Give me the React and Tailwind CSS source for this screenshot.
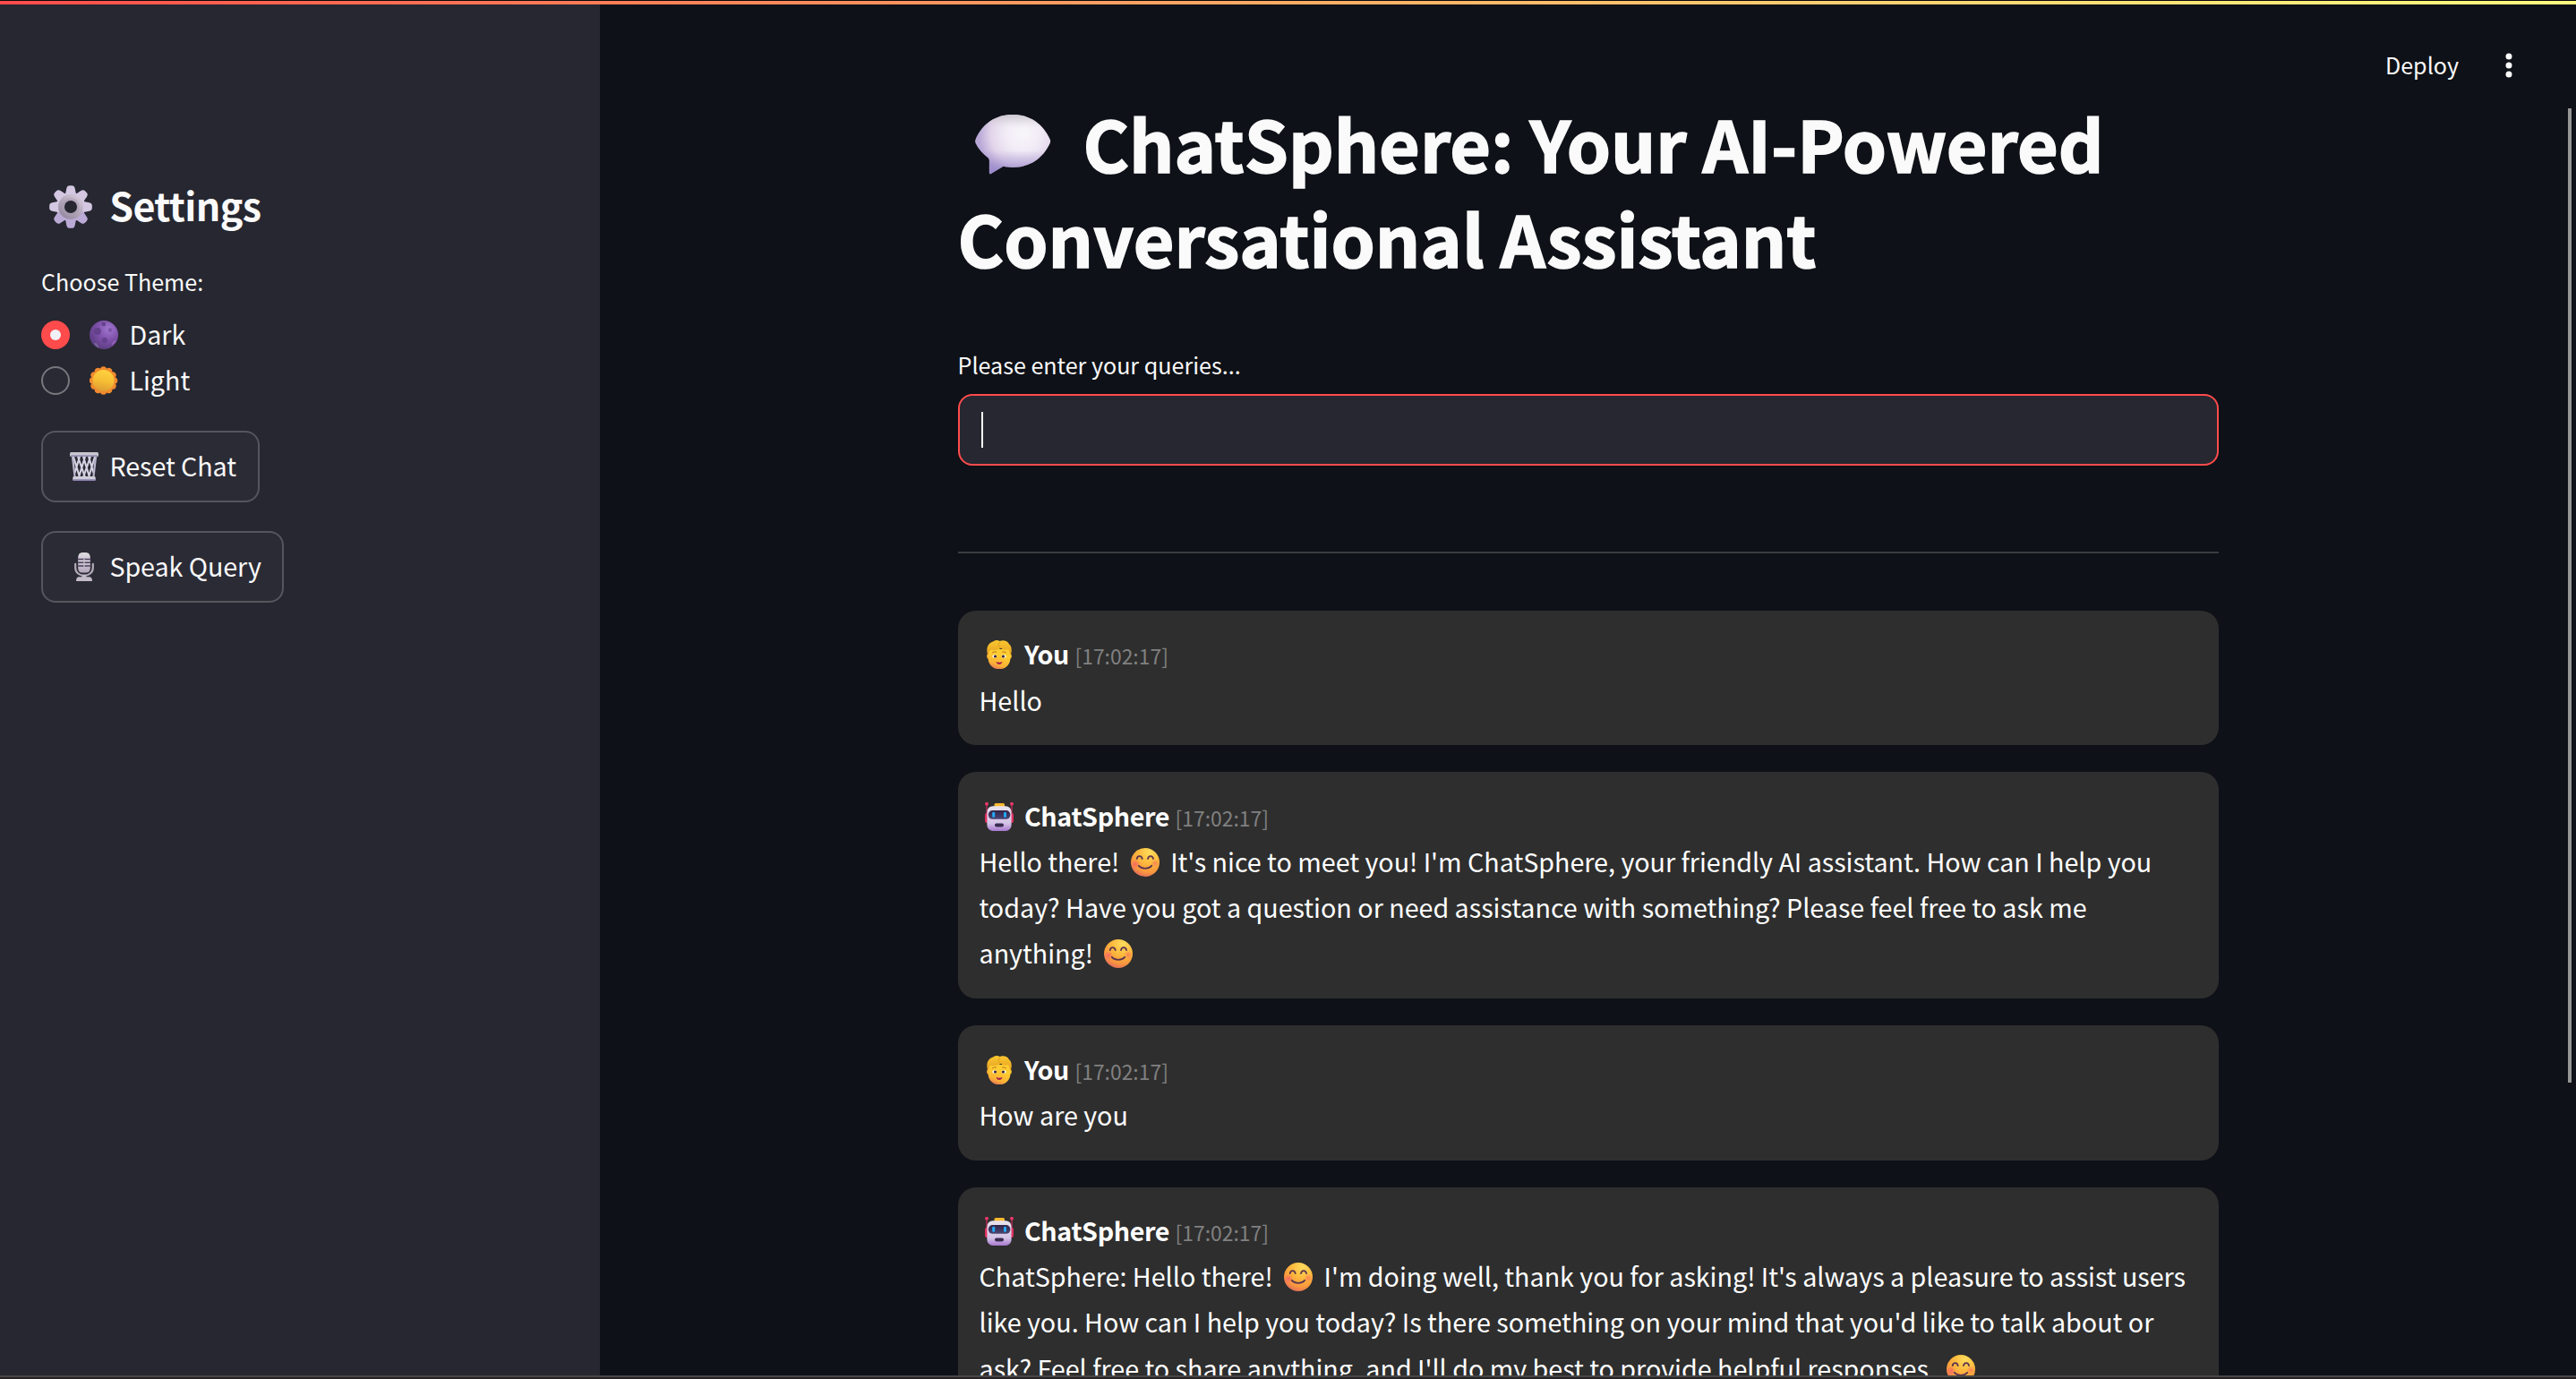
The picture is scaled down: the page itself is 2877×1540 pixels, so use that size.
import React from 'react';

function Glyph({ className = 'mx-[6px] size-8 align-[-5px]', children }) {
  return (
    <svg viewBox="0 0 32 32" className={'inline-block shrink-0 ' + className} aria-hidden="true">
      {children}
    </svg>
  );
}

function SpeechBubble() {
  return (
    <Glyph className="mx-[17px] size-[88px] align-[-14px]">
      <defs>
        <radialGradient id="bubbleFill" gradientUnits="userSpaceOnUse" cx="20" cy="11" r="18">
          <stop offset="0" stopColor="#f8f6fa" />
          <stop offset=".4" stopColor="#f1ebf6" />
          <stop offset=".72" stopColor="#e2d4ea" />
          <stop offset="1" stopColor="#b7a6d6" />
        </radialGradient>
        <linearGradient id="bubbleShade" x1="0" y1="0" x2="0" y2="1">
          <stop offset=".6" stopColor="#a394d0" stopOpacity="0" />
          <stop offset="1" stopColor="#8f80c6" stopOpacity=".85" />
        </linearGradient>
        <linearGradient id="bubbleTop" x1="0" y1="0" x2="0" y2="1">
          <stop offset="0" stopColor="#c2bfc6" stopOpacity=".8" />
          <stop offset=".22" stopColor="#d8d6da" stopOpacity="0" />
        </linearGradient>
      </defs>
      {['url(#bubbleFill)', 'url(#bubbleShade)', 'url(#bubbleTop)'].map((fill) => (
        <path
          key={fill}
          fill={fill}
          d="M.9 13.4C3.6 7 9 3.3 16 3.3s12.400 3.700 15.200 10.100q.3.7 0 1.400C28.400 21 23 24.700 16 24.700c-1.400 0-2.700-.1-3.800-.4L7.200 27.300q-.7.3-.7-.5V22q0-.6-.4-1.100C3.800 19.200 2 17.200.9 14.800q-.3-.7 0-1.400Z"
        />
      ))}
    </Glyph>
  );
}

const TEETH = [0, 45, 90, 135, 180, 225, 270, 315];

function Gear() {
  return (
    <Glyph className="ml-[9px] mr-[10px] size-12 align-[-8px]">
      <defs>
        <linearGradient id="gearBody" gradientUnits="userSpaceOnUse" x1="20" y1="0" x2="12" y2="32">
          <stop offset="0" stopColor="#dacfe6" />
          <stop offset="1" stopColor="#b9a6d5" />
        </linearGradient>
        <linearGradient id="gearRing" gradientUnits="userSpaceOnUse" x1="22" y1="8" x2="10" y2="24">
          <stop offset="0" stopColor="#d3c8d8" />
          <stop offset=".5" stopColor="#b3a8ba" />
          <stop offset="1" stopColor="#94889f" />
        </linearGradient>
        <mask id="gearHole">
          <rect width="32" height="32" fill="#fff" />
          <circle cx="16" cy="16" r="4.700" fill="#000" />
        </mask>
      </defs>
      <g mask="url(#gearHole)">
        <circle cx="16" cy="16" r="10.800" fill="url(#gearBody)" />
        {TEETH.map((a) => (
          <path
            key={a}
            transform={`rotate(${a} 16 16)`}
            fill={a > 100 && a < 260 ? '#bba9d6' : '#d3c7e2'}
            d="M11.500 9 12.900 2.200Q13.300.1 15.200.1h1.600q1.900 0 2.300 2.100L20.500 9Z"
          />
        ))}
        <circle cx="16" cy="16" r="9.300" fill="url(#gearRing)" />
        <circle cx="16" cy="16" r="6.600" fill="#a79bb0" opacity=".55" />
      </g>
    </Glyph>
  );
}

function Moon() {
  return (
    <Glyph>
      <defs>
        <radialGradient id="moonFill" cx=".66" cy=".3" r=".75">
          <stop offset="0" stopColor="#a177d0" />
          <stop offset=".5" stopColor="#7f51ab" />
          <stop offset="1" stopColor="#5b3d80" />
        </radialGradient>
      </defs>
      <circle cx="16" cy="16" r="16" fill="url(#moonFill)" />
      <g fill="#65418d">
        <circle cx="8.800" cy="12" r="4" />
        <circle cx="16.800" cy="22" r="3" />
        <circle cx="15.800" cy="4" r="2.300" />
        <circle cx="22.800" cy="10.500" r="2.200" opacity=".6" />
        <circle cx="3" cy="18" r="1.800" opacity=".7" />
      </g>
      <path d="M25 27.500q-.3-4 5.200-5.700A16 16 0 0 1 25 27.500Z" fill="#9767bd" />
      <path d="M4.800 25.500q4-2 5.600 5.400A16 16 0 0 1 4.800 25.500Z" fill="#77649a" />
    </Glyph>
  );
}

const RAYS = [0, 30, 60, 90, 120, 150, 180, 210, 240, 270, 300, 330];

function Sun() {
  return (
    <Glyph>
      <defs>
        <linearGradient id="sunFill" x1=".6" y1="0" x2=".4" y2="1">
          <stop offset="0" stopColor="#ffd23f" />
          <stop offset=".5" stopColor="#f7bf35" />
          <stop offset="1" stopColor="#dd9c33" />
        </linearGradient>
      </defs>
      <circle cx="15.500" cy="16" r="14" fill="#f28a2e" />
      {RAYS.map((a) => (
        <circle key={a} cx="15.500" cy="3.700" r="3.500" fill="#f28a2e" transform={`rotate(${a} 15.5 16)`} />
      ))}
      <circle cx="15.500" cy="16" r="12" fill="url(#sunFill)" />
    </Glyph>
  );
}

function Basket() {
  return (
    <Glyph>
      <g stroke="#d6d2e4" strokeWidth="2.100" fill="none">
        <path d="M4 5 11 28M9 5l8 23M15 5l7 23M21 5l5.500 18M28 5l-7 23M23 5l-8 23M17 5l-7 23M11 5 5.500 23" />
      </g>
      <path d="M1.800 4.500 4.600 28.500h2.200L4 4.500ZM30.200 4.500 27.400 28.500h-2.200L28 4.500Z" fill="#b9b5cc" />
      <rect x="0" y="0" width="32" height="5" rx="1.500" fill="#c9c7ce" />
      <rect x=".8" y="3.300" width="30.400" height="1.700" rx=".8" fill="#958fb2" />
      <rect x="3.300" y="27" width="25.400" height="5" rx="1.500" fill="#cfcdd8" />
      <rect x="3.800" y="30.300" width="24.400" height="1.700" rx=".8" fill="#8a7fae" />
    </Glyph>
  );
}

function Microphone() {
  return (
    <Glyph>
      <defs>
        <linearGradient id="micFill" x1="0" y1="0" x2="0" y2="1">
          <stop offset="0" stopColor="#dedbe1" />
          <stop offset="1" stopColor="#b5a9bd" />
        </linearGradient>
      </defs>
      <path d="M6.200 12.800V17c0 5 4 8.700 9.800 8.700s9.800-3.700 9.800-8.700v-4.200" fill="none" stroke="#b3aab9" strokeWidth="2.200" strokeLinecap="round" />
      <path d="M14 25h4l.6 2.200h3.600q2.800.5 2.800 4.800H7q0-4.300 2.800-4.800h3.600Z" fill="#c4bcca" />
      <path d="M9.200 6Q9.200 0 14 0h4q4.800 0 4.800 6v11q0 5.500-4.800 5.500h-4q-4.800 0-4.800-5.500Z" fill="url(#micFill)" />
      <path d="M9.200 7.500h13.600M9.200 11.300h13.600M9.200 15h13.600" stroke="#4b3f5c" strokeWidth="1.400" />
      <path d="M16 7v9" stroke="#c9c3cf" strokeWidth="1.200" />
    </Glyph>
  );
}

function Person() {
  return (
    <Glyph>
      <defs>
        <linearGradient id="personFace" x1=".7" y1="0" x2=".3" y2="1">
          <stop offset=".3" stopColor="#ffcd31" />
          <stop offset=".75" stopColor="#fbb234" />
          <stop offset="1" stopColor="#e8735a" />
        </linearGradient>
        <linearGradient id="personHair" x1="0" y1="0" x2="0" y2="1">
          <stop offset="0" stopColor="#fbc72f" />
          <stop offset="1" stopColor="#e6a424" />
        </linearGradient>
      </defs>
      <ellipse cx="4" cy="17.800" rx="1.900" ry="2.800" fill="#f7a935" />
      <ellipse cx="28" cy="17.800" rx="1.900" ry="2.800" fill="#fdbb2e" />
      <path d="M3.500 10h25v9.500c0 7.500-5.400 12.800-12.500 12.800S3.500 27 3.500 19.500Z" fill="url(#personFace)" />
      <path d="M2.800 15C1.200 8.500 3.500 3 9.500 1.200 12-.4 15 0 16.500 1 20-.8 25.500.6 27 4.200c2.700 2 3.400 6.300 2.200 10.800h-1.500q0-3-1.700-4.800c-3 1-6.500.4-8-1.400-3.500 2.600-8.500 2.600-11.500 2q-2 1.200-2 4.200Z" fill="url(#personHair)" />
      <path d="M18 8.500C14.800 7.500 14.600 4 17 2" fill="none" stroke="#d9941c" strokeWidth=".8" />
      <path d="M8.300 13.800q2-1.600 4.200-.8M19.500 13q2.200-.8 4.200.8" fill="none" stroke="#b5691f" strokeWidth=".9" strokeLinecap="round" />
      <ellipse cx="10.800" cy="18" rx="2.500" ry="1.700" fill="#fff" />
      <ellipse cx="21.200" cy="18" rx="2.500" ry="1.700" fill="#fff" />
      <circle cx="11.500" cy="18" r="1.600" fill="#3a2340" />
      <circle cx="20.500" cy="18" r="1.600" fill="#3a2340" />
      <path d="M12.500 24q3.500 1.300 7 0-.7 3-3.500 3t-3.500-3Z" fill="#a41e50" />
    </Glyph>
  );
}

function Robot() {
  return (
    <Glyph>
      <defs>
        <linearGradient id="robotHead" x1="0" y1="0" x2="0" y2="1">
          <stop offset="0" stopColor="#e9e4ee" />
          <stop offset=".7" stopColor="#d3c2e6" />
          <stop offset="1" stopColor="#a878cf" />
        </linearGradient>
        <linearGradient id="robotVisor" x1="0" y1="0" x2="0" y2="1">
          <stop offset="0" stopColor="#322447" />
          <stop offset="1" stopColor="#4a4572" />
        </linearGradient>
      </defs>
      <path d="M2 2v12M30 2v12" stroke="#b92a5a" strokeWidth="1.400" />
      <circle cx="2" cy="1.700" r="1.900" fill="#f0386b" />
      <circle cx="30" cy="1.700" r="1.900" fill="#f0386b" />
      <rect x="0" y="12" width="5" height="11" rx="2" fill="#e1305f" />
      <rect x="27" y="12" width="5" height="11" rx="2" fill="#e1305f" />
      <rect x="10.500" y="1" width="11.500" height="5" rx="1.500" fill="#f6b92f" />
      <rect x="2.400" y="4.200" width="27.200" height="27.800" rx="6.500" fill="url(#robotHead)" />
      <rect x="3.800" y="9" width="24.600" height="9.800" rx="4.800" fill="url(#robotVisor)" />
      <rect x="8.200" y="10.800" width="3" height="6.200" rx="1.400" fill="#23a9f5" />
      <rect x="21" y="10.800" width="3" height="6.200" rx="1.400" fill="#23a9f5" />
      <rect x="11" y="23.400" width="10" height="4" rx="1.800" fill="#3a2c50" />
    </Glyph>
  );
}

function Smile() {
  return (
    <Glyph>
      <defs>
        <radialGradient id="smileFill" gradientUnits="userSpaceOnUse" cx="21" cy="5" r="28">
          <stop offset="0" stopColor="#fddc5c" />
          <stop offset=".45" stopColor="#fdb93d" />
          <stop offset=".8" stopColor="#f9963e" />
          <stop offset="1" stopColor="#e5705a" />
        </radialGradient>
        <radialGradient id="smileBlush">
          <stop offset="0" stopColor="#f8606a" stopOpacity=".85" />
          <stop offset="1" stopColor="#f8606a" stopOpacity="0" />
        </radialGradient>
      </defs>
      <circle cx="16" cy="16" r="16" fill="url(#smileFill)" />
      <circle cx="5" cy="18" r="5" fill="url(#smileBlush)" />
      <circle cx="27" cy="17" r="4.500" fill="url(#smileBlush)" opacity=".7" />
      <g fill="none" stroke="#5c3550" strokeLinecap="round" strokeWidth="1.800">
        <path d="M6.700 12.200c.7-4 5.300-4 6 0M19 12.200c.7-4 5.300-4 6 0" />
        <path d="M8.800 19.800c3.600 4 10.800 4 14.400 0" />
      </g>
    </Glyph>
  );
}

function ThemeOption({ checked, icon, label }) {
  return (
    <div className="flex h-[51.2px] items-center gap-4">
      {checked ? (
        <span className="flex size-8 items-center justify-center rounded-full bg-[#ff4b4b]">
          <span className="size-3 rounded-full bg-[#f0f2f6]" />
        </span>
      ) : (
        <span className="size-8 rounded-full border-2 border-[#77777d] bg-[#2a2a34]" />
      )}
      <span className="pb-[2px] leading-[48px]">
        {icon} {label}
      </span>
    </div>
  );
}

function SidebarButton({ icon, children }) {
  return (
    <button className="flex h-20 w-fit items-start whitespace-nowrap rounded-2xl border-2 border-[#55555d] bg-[#2b2b35] pt-[11.500px] pr-[23.500px] pl-6 leading-[51.2px] tracking-[-0.05px]">
      <span>
        {icon} {children}
      </span>
    </button>
  );
}

function Message({ icon, author, children }) {
  return (
    <article className="rounded-[20px] bg-[#2e2e2e] px-6 pt-[22.500px] pb-[25.500px] leading-[51.2px] text-white">
      <div className="h-[51.2px] whitespace-nowrap">
        {icon} <strong className="font-bold tracking-[-0.35px]">{author}</strong>{' '}
        <small className="text-[22.9px] text-[#808080]">[17:02:17]</small>
      </div>
      <p>{children}</p>
    </article>
  );
}

export default function App() {
  return (
    <div className="relative flex h-[1540px] w-[2877px] flex-col overflow-hidden bg-[#0e1117] font-['Noto_Sans_CJK_SC','Noto_Sans',sans-serif] text-[28.67px] text-[#fafafa]">
      <div className="h-px shrink-0 bg-[#0b0a0c]" />
      <div className="h-1 shrink-0 bg-linear-to-r from-[#ff4b4b] to-[#fffd80]" />

      <div className="flex min-h-0 flex-1">
        <aside className="w-[670px] shrink-0 bg-[#262730] px-[46px] pt-[194.500px]">
          <h2 className="h-[57.6px] whitespace-nowrap text-[43px] font-bold leading-[57.6px] tracking-[-0.6px]">
            <Gear /> Settings
          </h2>
          <div className="mt-[37px] h-10 text-[25.1px] leading-10">Choose Theme:</div>
          <div className="mt-[14.400px] flex flex-col">
            <ThemeOption checked icon={<Moon />} label="Dark" />
            <ThemeOption icon={<Sun />} label="Light" />
          </div>
          <div className="mt-[30.100px] flex flex-col gap-8">
            <SidebarButton icon={<Basket />}>Reset Chat</SidebarButton>
            <SidebarButton icon={<Microphone />}>Speak Query</SidebarButton>
          </div>
        </aside>

        <main className="flex min-w-0 flex-1 flex-col overflow-hidden">
          <header className="flex h-[102px] shrink-0 justify-end gap-[52px] pt-[47px] pr-[71px] text-[25.1px] leading-10">
            <span>Deploy</span>
            <svg viewBox="0 0 8 28" className="mt-[7px] h-7 w-2" fill="#fafafa">
              <circle cx="4" cy="4" r="3.500" />
              <circle cx="4" cy="14" r="3.500" />
              <circle cx="4" cy="24" r="3.500" />
            </svg>
          </header>

          <div className="mx-auto w-[1408px] shrink-0">
            <h1 className="h-[211.2px] text-[78.8px] font-bold leading-[105.6px] [-webkit-text-stroke:1.6px_#fafafa]">
              <SpeechBubble /> ChatSphere: Your AI-Powered
              <br />
              Conversational Assistant
            </h1>
            <label className="mt-[68.800px] block h-[53px] text-[25.1px] leading-10">Please enter your queries...</label>
            <div className="flex h-20 items-center rounded-2xl border-2 border-[#ff4b4b] bg-[#262730] px-6">
              <span className="h-10 w-[2px] bg-[#fafafa]" />
            </div>
            <hr className="mt-24 border-t-2 border-[#3a3b3f]" />

            <div className="mt-16 flex flex-col gap-[30px]">
              <Message icon={<Person />} author="You">
                Hello
              </Message>
              <Message icon={<Robot />} author="ChatSphere">
                Hello there! <Smile /> It's nice to meet you! I'm ChatSphere, your friendly AI assistant. How can I help
                you today? Have you got a question or need assistance with something? Please feel free to ask me
                anything! <Smile />
              </Message>
              <Message icon={<Person />} author="You">
                How are you
              </Message>
              <Message icon={<Robot />} author="ChatSphere">
                ChatSphere: Hello there! <Smile /> I'm doing well, thank you for asking! It's always a pleasure to
                assist users like you. How can I help you today? Is there something on your mind that you'd like to
                talk about or ask? Feel free to share anything, and I'll do my best to provide helpful responses.{' '}
                <Smile />
              </Message>
            </div>
          </div>
        </main>
      </div>

      <div className="h-[2px] shrink-0 bg-[#474747]" />
      <div className="h-[2px] shrink-0 bg-[#272325]" />
      <div className="absolute top-[121px] right-[5px] h-[1088px] w-1 bg-[#959595]" />
    </div>
  );
}
